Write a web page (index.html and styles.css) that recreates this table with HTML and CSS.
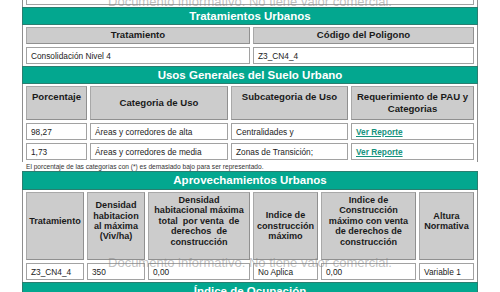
FILE: index.html
```html
<!DOCTYPE html>
<html lang="es">
<head>
<meta charset="utf-8">
<title>Ficha normativa</title>
<link rel="stylesheet" href="styles.css">
</head>
<body>
<div class="page">
  <div class="sec frag">
    <div class="cell white stub"></div>
  </div>

  <div class="bar">Tratamientos Urbanos</div>
  <div class="sec trat">
    <div class="cell head h17">Tratamiento</div>
    <div class="cell head h17">Código del Poligono</div>
    <div class="cell white h17">Consolidación Nivel 4</div>
    <div class="cell white h17">Z3_CN4_4</div>
  </div>

  <div class="bar">Usos Generales del Suelo Urbano</div>
  <div class="sec usos">
    <div class="cell head h34 top">Porcentaje</div>
    <div class="cell head h34">Categoria de Uso</div>
    <div class="cell head h34 top">Subcategoria de Uso</div>
    <div class="cell head h34">Requerimiento de PAU y<br>Categorias</div>
    <div class="cell white h17">98,27</div>
    <div class="cell white h17">Áreas y corredores de alta</div>
    <div class="cell white h17">Centralidades y</div>
    <div class="cell white h17"><a class="link" href="#">Ver Reporte</a></div>
    <div class="cell white h17">1,73</div>
    <div class="cell white h17">Áreas y corredores de media</div>
    <div class="cell white h17">Zonas de Transición;</div>
    <div class="cell white h17"><a class="link" href="#">Ver Reporte</a></div>
  </div>
  <p class="note">El porcentaje de las categorías con (*) es demasiado bajo para ser representado.</p>

  <div class="bar bar-tall">Aprovechamientos Urbanos</div>
  <div class="sec aprov">
    <div class="cell head h68 small up">Tratamiento</div>
    <div class="cell head h68 small up">Densidad<br>habitacion<br>al máxima<br>(Viv/ha)</div>
    <div class="cell head h68 small up">Densidad<br>habitacional máxima<br>total&nbsp; por venta&nbsp; de<br>derechos&nbsp; de<br>construcción</div>
    <div class="cell head h68 small">Indice de<br>construcción<br>máximo</div>
    <div class="cell head h68 small up">Indice de<br>Construcción<br>máximo con venta<br>de derechos de<br>construcción</div>
    <div class="cell head h68 small up">Altura<br>Normativa</div>
    <div class="cell white h17">Z3_CN4_4</div>
    <div class="cell white h17">350</div>
    <div class="cell white h17">0,00</div>
    <div class="cell white h17">No Aplica</div>
    <div class="cell white h17">0,00</div>
    <div class="cell white h17">Variable 1</div>
  </div>

  <div class="bar">Índice de Ocupación</div>

  <div class="mark mark-top">Documento informativo. No tiene valor comercial.</div>
  <div class="mark mark-bottom">Documento informativo. No tiene valor comercial.</div>
</div>
</body>
</html>
```

FILE: styles.css
```css
html, body {
  margin: 0;
  padding: 0;
  background: #ffffff;
}

body {
  font-family: "Liberation Sans", Arial, sans-serif;
  color: #1e1e1e;
  overflow: hidden;
}

.page {
  position: relative;
  margin-left: 22px;
  width: 456px;
}

.sec {
  display: grid;
  gap: 3px;
  padding: 2px 3px;
  border-left: 1px solid #8e8e8e;
  border-right: 1px solid #8e8e8e;
}

.frag {
  padding-top: 0;
}

.trat {
  grid-template-columns: 224px 1fr;
}

.usos {
  grid-template-columns: 61px 138px 117px 1fr;
}

.aprov {
  grid-template-columns: 58px 58px 102px 65px 95px 1fr;
}

.bar {
  box-sizing: border-box;
  height: 18px;
  background: #03a78f;
  border: 1px solid #2a7e70;
  color: #ffffff;
  font-weight: bold;
  font-size: 11.5px;
  line-height: 16px;
  text-align: center;
  white-space: nowrap;
  overflow: hidden;
}

.bar-tall {
  height: 19px;
  line-height: 17px;
}

.cell {
  box-sizing: border-box;
  border: 1px solid #a2a2a2;
  display: flex;
  align-items: center;
  overflow: hidden;
}

.stub {
  height: 5px;
  border-top: none;
}

.white {
  background: #ffffff;
  font-size: 8.3px;
  padding-left: 4px;
  white-space: nowrap;
  color: #222222;
}

.head {
  background: #cccccc;
  border-color: #a8a8a8 #909090 #909090 #a8a8a8;
  justify-content: center;
  text-align: center;
  font-weight: bold;
  font-size: 9.6px;
  line-height: 12.5px;
  color: #1a1a1a;
}

.head.top {
  align-items: flex-start;
  padding-top: 4px;
}

.head.small {
  font-size: 9.1px;
  line-height: 10.4px;
}

.head.up {
  padding-bottom: 10px;
}

.h17 { height: 17px; }
.h34 { height: 34px; }
.h68 { height: 68px; }

.link {
  color: #15937e;
  font-weight: bold;
  text-decoration: underline;
}

.note {
  margin: 0;
  height: 9px;
  padding-left: 4px;
  font-size: 6.6px;
  line-height: 9px;
  color: #333333;
  white-space: nowrap;
}

.mark {
  position: absolute;
  left: 0;
  right: 0;
  text-align: center;
  font-size: 13px;
  line-height: 15px;
  color: rgba(130, 130, 130, 0.5);
  white-space: nowrap;
  pointer-events: none;
}

.mark-top {
  top: -6px;
}

.mark-bottom {
  top: 255px;
}
```
